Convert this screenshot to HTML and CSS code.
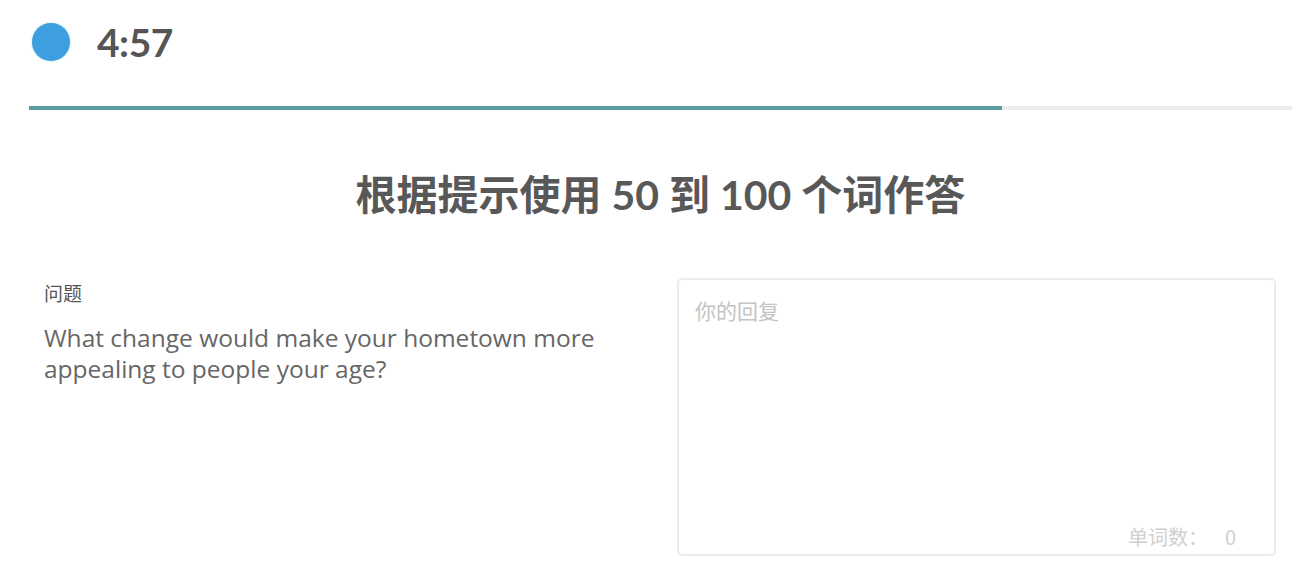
FILE: index.html
```html
<!DOCTYPE html>
<html lang="zh">
<head>
<meta charset="utf-8">
<link rel="stylesheet" href="styles.css">
</head>
<body>
<div class="page">
  <header class="timer">
    <span class="dot"></span>
    <span class="time">4:57</span>
  </header>
  <div class="progress"><div class="fill"></div></div>
  <h1 class="title">根据提示使用 50 到 100 个词作答</h1>
  <div class="content">
    <div class="question">
      <div class="label">问题</div>
      <p class="prompt">What change would make your hometown more appealing to people your age?</p>
    </div>
    <div class="answer">
      <div class="placeholder">你的回复</div>
      <div class="count">单词数：<span class="num">0</span></div>
    </div>
  </div>
</div>
</body>
</html>
```

FILE: styles.css
```css
html, body {
  margin: 0;
  padding: 0;
  background: #ffffff;
}
body {
  font-family: "Open Sans", Lato, "Noto Sans CJK SC", sans-serif;
  color: #555;
}
.page {
  width: 1263px;
  margin-left: 29px;
}
.timer {
  display: flex;
  align-items: center;
  gap: 27px;
  height: 84px;
  padding-left: 3px;
}
.dot {
  width: 38px;
  height: 38px;
  border-radius: 50%;
  background: #3d9fe0;
  box-shadow: 0 0 2px rgba(61,159,224,0.5);
}
.time {
  font-family: Lato, "Open Sans", sans-serif;
  font-size: 39px;
  font-weight: 700;
  color: #555;
  letter-spacing: -0.5px;
}
.progress {
  height: 4px;
  background: #ececec;
  margin-top: 22px;
}
.fill {
  width: 973px;
  height: 100%;
  background: #5b9a9e;
}
.title {
  margin: 58px 0 0;
  text-align: center;
  font-family: Lato, "Noto Sans CJK SC", sans-serif;
  font-size: 41px;
  font-weight: 700;
  color: #585858;
  line-height: 54px;
}
.content {
  display: grid;
  grid-template-columns: 1fr 599px;
  padding: 0 16px 0 15px;
  margin-top: 56px;
}
.question {
  padding-top: 2px;
}
.label {
  font-family: "Noto Sans CJK SC", sans-serif;
  font-size: 19px;
  color: #555;
  line-height: 26px;
}
.prompt {
  margin: 16px 0 0;
  width: 600px;
  font-size: 24.5px;
  line-height: 31px;
  color: #666;
}
.answer {
  height: 278px;
  box-sizing: border-box;
  border: 2px solid #ececec;
  border-radius: 5px;
  padding: 14px 16px 2px 16px;
  display: flex;
  flex-direction: column;
  justify-content: space-between;
}
.placeholder {
  font-family: "Noto Sans CJK SC", sans-serif;
  font-size: 21px;
  color: #c4c4c4;
  line-height: 32px;
}
.count {
  align-self: flex-end;
  font-family: "Noto Sans CJK SC", sans-serif;
  font-size: 20px;
  color: #cfcfcf;
  line-height: 30px;
  padding-right: 22px;
}
.num {
  margin-left: 17px;
}
```
